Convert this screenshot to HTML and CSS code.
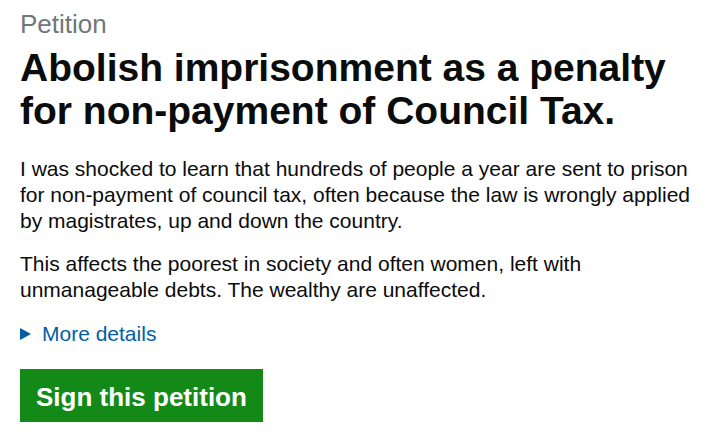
FILE: index.html
```html
<!DOCTYPE html>
<html lang="en">
<head>
<meta charset="utf-8">
<title>Petition</title>
<link rel="stylesheet" href="styles.css">
</head>
<body>
<main class="page">
  <p class="caption">Petition</p>
  <h1 class="title">Abolish imprisonment as a penalty for non-payment of Council Tax.</h1>
  <p class="body">I was shocked to learn that hundreds of people a year are sent to prison for non-payment of council tax, often because the law is wrongly applied by magistrates, up and down the country.</p>
  <p class="body">This affects the poorest in society and often women, left with unmanageable debts. The wealthy are unaffected.</p>
  <div class="details"><span class="arrow"></span><a class="details-link" href="#">More details</a></div>
  <a class="button" href="#">Sign this petition</a>
</main>
</body>
</html>
```
FILE: styles.css
```css
html, body {
  margin: 0;
  padding: 0;
  background: #ffffff;
}
body {
  font-family: "Liberation Sans", Arial, sans-serif;
  color: #0b0c0c;
}
.page {
  padding: 9px 20px 0 20px;
  display: flex;
  flex-direction: column;
  align-items: flex-start;
}
.caption {
  margin: 0;
  font-size: 26px;
  line-height: 30px;
  color: #6f777b;
}
.title {
  margin: 7px 0 0 0;
  font-size: 39px;
  line-height: 43px;
  font-weight: 700;
  width: 680px;
}
.body {
  margin: 24px 0 0 0;
  font-size: 21px;
  line-height: 26px;
}
.body + .body {
  margin-top: 17px;
}
.details {
  margin-top: 18px;
  display: flex;
  align-items: center;
  gap: 11px;
  font-size: 21px;
  line-height: 26px;
}
.arrow {
  width: 0;
  height: 0;
  border-top: 6px solid transparent;
  border-bottom: 6px solid transparent;
  border-left: 11px solid #005ea5;
}
.details-link {
  color: #005ea5;
  text-decoration: none;
}
.button {
  margin-top: 22px;
  display: inline-block;
  background: #138a18;
  color: #ffffff;
  font-weight: 700;
  font-size: 26px;
  line-height: 30px;
  padding: 13px 16px 10px 16px;
  text-decoration: none;
  box-shadow: 0 3px 0 #003618;
}
```
